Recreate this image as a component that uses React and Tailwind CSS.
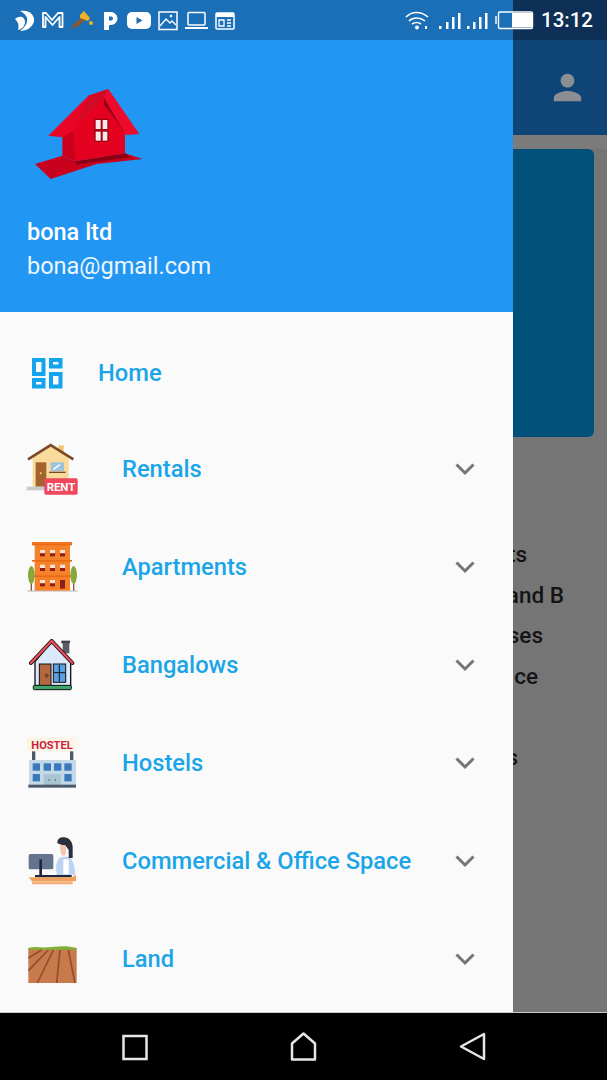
import React from "react";

const font = { fontFamily: "Roboto, sans-serif" };

function Logo() {
  return (
    <svg className="w-[120px] h-[100px] block" viewBox="0 0 360 300">
      <polygon points="15,240 97,215 135,232 285,208 338,225 200,240 62,285" fill="#c9001e" />
      <path d="M135 232L285 208 300 220 140 242z" fill="#8c0014" />
      <polygon points="97,150 135,130 135,232 97,215" fill="#cc001c" />
      <polygon points="130,130 222,35 285,145 285,208 135,232" fill="#e4001f" />
      <polygon points="55,155 175,35 235,15 222,42 130,142 95,160" fill="#ea0426" />
      <polygon points="175,35 235,15 222,42 140,120" fill="#d30a24" />
      <polygon points="235,15 328,150 288,153 222,42" fill="#ee0a2a" />
      <polygon points="222,42 288,153 272,128 222,62" fill="#96001a" />
      <rect x="193" y="104" width="43" height="70" fill="#a30018" />
      <rect x="197" y="108" width="15" height="27" fill="#f8e8e8" />
      <rect x="218" y="108" width="14" height="27" fill="#f8e8e8" />
      <rect x="197" y="143" width="15" height="27" fill="#f8e8e8" />
      <rect x="218" y="143" width="14" height="27" fill="#f8e8e8" />
    </svg>
  );
}

function StatusLeft() {
  return (
    <svg className="w-[240px] h-[40px] block" viewBox="0 0 240 40" fill="none">
      <path d="M20 11C30 9 35 16 34 21 33 27 27 31 20 31 25 27 28 23 27 18 26 15 24 13 20 11z" fill="#fff" />
      <path d="M15 19C20 15 25 17 25 22 25 26 22 29 18 30 19 26 19 23 15 19z" fill="#fff" />
      <path d="M43 27V13h3l6 7 6-7h4.500v14h-3V17l-7 8-7-8v10z" stroke="#fff" strokeWidth="1.800" strokeLinejoin="round" />
      <path d="M73 25l9-8 3 3-8 7-5 1z" fill="#8a5a2e" />
      <path d="M80 15l4-4 6 7-2 3-8-3z" fill="#f0b323" />
      <circle cx="91" cy="23" r="2" fill="#f0b323" />
      <path d="M104 30V12h7a6 6 0 0 1 0 13h-2v5zM109 16.500v4h2a2 2 0 0 0 0-4z" fill="#fff" fillRule="evenodd" />
      <rect x="127" y="12" width="24" height="17" rx="5" fill="#fff" />
      <polygon points="136.500,17 136.500,24 142.500,20.500" fill="#1c6fb5" />
      <rect x="159" y="12" width="18" height="17.500" stroke="#fff" strokeWidth="1.500" />
      <path d="M160 26l6-7 4 4 2-2 4 4" stroke="#fff" strokeWidth="1.300" />
      <circle cx="171" cy="16" r="1.300" fill="#fff" />
      <rect x="188" y="12.500" width="17" height="12.500" rx="1" stroke="#fff" strokeWidth="1.500" />
      <rect x="185" y="27" width="23" height="2" fill="#fff" />
      <rect x="216" y="13" width="18" height="16" rx="1" stroke="#fff" strokeWidth="1.500" />
      <rect x="216" y="13" width="18" height="4" fill="#fff" />
      <path d="M219 20h5v6h-5zM227 20h4M227 23h4M227 26h4" stroke="#fff" strokeWidth="1.300" />
    </svg>
  );
}

function StatusRight() {
  return (
    <svg className="w-[133px] h-[40px] block" viewBox="405 0 133 40" fill="none">
      <path d="M406 17c6-6 15-6 22 0M409 21c4-4 11-4 16 0M412 24c3-2 6-2 9 0" stroke="#fff" strokeWidth="1.600" />
      <circle cx="417" cy="27.500" r="2" fill="#fff" />
      <rect x="425" y="26" width="2" height="3" fill="#fff" />
      {[[439, 26, 3], [446, 22, 7], [452, 17, 12], [458, 13, 16]].map(([x, y, h]) => (
        <rect key={x} x={x} y={y} width="2.500" height={h} fill="#fff" />
      ))}
      {[[467, 26, 3], [473, 22, 7], [479, 17, 12], [485, 13, 16]].map(([x, y, h]) => (
        <rect key={x} x={x} y={y} width="2.500" height={h} fill="#fff" />
      ))}
      <rect x="498.500" y="12" width="34" height="16.500" rx="1.500" stroke="#fff" strokeWidth="1.400" />
      <rect x="495" y="16" width="2" height="8" fill="#fff" opacity="0.700" />
      <rect x="512" y="13" width="20" height="14.500" fill="#fff" />
    </svg>
  );
}

function Chevron() {
  return (
    <svg className="w-[24px] h-[16px] block" viewBox="0 0 24 16" fill="none">
      <path d="M3.500 3.500L12 12l8.500-8.500" stroke="#757575" strokeWidth="3" />
    </svg>
  );
}

function HomeIcon() {
  return (
    <svg className="w-[32px] h-[32px] block" viewBox="31 357 32 32" fill="none" stroke="#14a3ee" strokeWidth="4">
      <rect x="34" y="360" width="9.500" height="14" />
      <rect x="34" y="380" width="9.500" height="6.500" />
      <rect x="51" y="360" width="9.500" height="6.500" />
      <rect x="51" y="374" width="9.500" height="12.500" />
    </svg>
  );
}

function Rent() {
  return (
    <svg className="w-[52px] h-[52px] block" viewBox="78 309 156 156">
      <rect x="175" y="316" width="16" height="24" fill="#f0c66e" />
      <polygon points="98,345 152,318 206,345 206,440 98,440" fill="#f9dc9b" />
      <path d="M84 358l68-43 68 43" fill="none" stroke="#7a4a2a" strokeWidth="8" />
      <rect x="107" y="367" width="32" height="73" fill="#a4622f" />
      <circle cx="122" cy="400" r="3" fill="#f5d778" />
      <rect x="152" y="367" width="40" height="26" fill="#9cc3de" />
      <path d="M160 388l20-14" stroke="#fff" strokeWidth="4" />
      <rect x="147" y="395" width="50" height="4" fill="#7a4a2a" />
      <rect x="80" y="440" width="90" height="11" fill="#c9c9c9" />
      <rect x="133" y="415" width="100" height="49" rx="5" fill="#f0465e" />
      <text x="183" y="453" textAnchor="middle" fontFamily="Roboto, sans-serif" fontWeight="700" fontSize="34" fill="#fff" textLength="86" lengthAdjust="spacingAndGlyphs">RENT</text>
    </svg>
  );
}

function Apt() {
  const ys = [630, 674, 720];
  const xs = [120, 150, 180];
  return (
    <svg className="w-[52px] h-[52px] block" viewBox="78 603 156 156">
      <rect x="82" y="750" width="150" height="6" fill="#d8d8d8" />
      <rect x="104" y="610" width="106" height="142" fill="#f5822a" />
      <rect x="96" y="606" width="120" height="7" fill="#f0741d" />
      <rect x="96" y="612" width="120" height="4" fill="#e86a14" />
      <rect x="96" y="660" width="120" height="5" fill="#e86a14" />
      <rect x="96" y="706" width="120" height="5" fill="#e86a14" />
      {ys.flatMap((y) =>
        xs.map((x) => (
          <g key={`${x}-${y}`}>
            <rect x={x} y={y} width="15" height="10" fill="#f3e2d5" />
            <rect x={x} y={y + 10} width="15" height="9" fill="#8e1f18" />
          </g>
        ))
      )}
      <rect x="180" y="720" width="15" height="26" fill="#8e1f18" />
      <rect x="92" y="715" width="4" height="37" fill="#8a5a2e" />
      <rect x="219" y="715" width="4" height="37" fill="#8a5a2e" />
      <ellipse cx="94" cy="705" rx="10" ry="27" fill="#88a83c" />
      <ellipse cx="221" cy="705" rx="10" ry="27" fill="#88a83c" />
    </svg>
  );
}

function Bang() {
  return (
    <svg className="w-[52px] h-[52px] block" viewBox="78 57 156 156">
      <rect x="184" y="62" width="26" height="8" fill="#3d3d45" />
      <rect x="188" y="68" width="20" height="32" fill="#5b5b66" />
      <polygon points="155,65 212,125 212,198 105,198 105,125" fill="#dbe9fb" stroke="#111" strokeWidth="4" />
      <path d="M93 129l62-66 62 66" fill="none" stroke="#111" strokeWidth="12" strokeLinecap="round" strokeLinejoin="round" />
      <path d="M93 129l62-66 62 66" fill="none" stroke="#ef4d5a" strokeWidth="7" strokeLinecap="round" strokeLinejoin="round" />
      <rect x="118" y="132" width="35" height="66" fill="#b5673f" stroke="#111" strokeWidth="3" />
      <circle cx="140" cy="167" r="4" fill="none" stroke="#111" strokeWidth="2" />
      <rect x="160" y="132" width="37" height="55" fill="#5aa0e0" stroke="#111" strokeWidth="3" />
      <path d="M178 135v50M162 158h33" stroke="#111" strokeWidth="3" />
      <rect x="100" y="196" width="114" height="13" rx="3" fill="#3fa66a" stroke="#111" strokeWidth="3" />
    </svg>
  );
}

function Hostel() {
  return (
    <svg className="w-[52px] h-[52px] block" viewBox="78 351 156 156">
      <rect x="80" y="352" width="150" height="42" fill="#fbf5e6" />
      <text x="156" y="386" textAnchor="middle" fontFamily="Roboto, sans-serif" fontWeight="700" fontSize="34" fill="#cf1c3d" textLength="124" lengthAdjust="spacingAndGlyphs">HOSTEL</text>
      <rect x="96" y="394" width="10" height="26" fill="#4d5a6a" />
      <rect x="210" y="394" width="10" height="26" fill="#4d5a6a" />
      <rect x="87" y="420" width="141" height="76" fill="#c3d9e8" />
      {[98, 131, 162, 193].map((x) => (
        <rect key={x} x={x} y="430" width="22" height="22" fill="#3a78bb" />
      ))}
      <rect x="98" y="462" width="22" height="22" fill="#3a78bb" />
      <rect x="193" y="462" width="22" height="22" fill="#3a78bb" />
      <rect x="131" y="462" width="52" height="34" fill="#a9c4d2" />
      <circle cx="147" cy="480" r="2" fill="#444" />
      <circle cx="166" cy="480" r="2" fill="#444" />
      <rect x="85" y="494" width="143" height="9" fill="#4d5a6a" />
    </svg>
  );
}

function Office() {
  return (
    <svg className="w-[52px] h-[52px] block" viewBox="78 45 156 156">
      <path d="M168 140c2-18 10-30 20-30h14c14 2 22 20 24 55h-56z" fill="#bcd4f0" />
      <rect x="190" y="118" width="16" height="45" fill="#fff" />
      <path d="M172 68c0-14 12-18 22-16 14 2 24 14 24 30v32h-12v-24l-10-14c-8 0-14 0-24-8z" fill="#2b2f3a" />
      <path d="M180 72c6 4 12 6 18 6v20c0 8-8 12-12 8-6-8-6-22-6-34z" fill="#f3c7ad" />
      <rect x="86" y="102" width="74" height="46" rx="5" fill="#64748f" />
      <rect x="118" y="118" width="8" height="50" fill="#1f2740" />
      <rect x="105" y="165" width="110" height="7" fill="#1f2740" />
      <polygon points="86,172 215,172 228,165 228,184 96,184" fill="#f0a05c" />
      <rect x="96" y="184" width="122" height="9" fill="#f4b27a" />
    </svg>
  );
}

function Land() {
  return (
    <svg className="w-[52px] h-[52px] block" viewBox="78 339 156 156">
      <rect x="85" y="384" width="145" height="105" fill="#c97a4c" />
      <path d="M85 384c20-6 40 0 60-2s50-8 85 2v5H85z" fill="#7fb13a" />
      <g stroke="#8f4f2e" strokeWidth="5" fill="none">
        <path d="M125 390L85 414" />
        <path d="M145 390L85 452" />
        <path d="M160 390L112 489" />
        <path d="M180 390L170 489" />
        <path d="M205 390L225 489" />
      </g>
    </svg>
  );
}

const items = [
  ["Rentals", Rent],
  ["Apartments", Apt],
  ["Bangalows", Bang],
  ["Hostels", Hostel],
  ["Commercial & Office Space", Office],
  ["Land", Land],
];

const backLines = [
  ["ts", "pr-[80px]"],
  ["and B", "pr-[43px]"],
  ["ses", "pr-[64px]"],
  ["ce", "pr-[69px]"],
  ["\u00a0", "pr-[0px]"],
  ["s", "pr-[89px]"],
];

export default function App() {
  return (
    <div className="w-[607px] h-[1080px] flex flex-col overflow-hidden bg-black" style={font}>
      <div className="flex flex-1 min-h-0">
        <div className="w-[513px] flex flex-col shrink-0">
          <div className="h-[40px] bg-[#1b6fb6]">
            <div className="h-[40px] flex items-center justify-between relative z-10 -mr-[25px]">
              <StatusLeft />
              <StatusRight />
            </div>
          </div>
          <div className="h-[272px] bg-[#2196f3] flex flex-col pl-[27px] text-white">
            <div className="mt-[44px] ml-[3px]">
              <Logo />
            </div>
            <div className="mt-[31px] text-[23.500px] leading-[34px] font-medium">bona ltd</div>
            <div className="text-[23.500px] leading-[34px] text-[#eef6fe]">bona@gmail.com</div>
          </div>
          <div className="flex-1 bg-[#fafafa] text-[#1aa5e9] text-[23.700px] font-medium">
            <div className="h-[108px] pt-[45px] pl-[31px] flex items-start">
              <HomeIcon />
              <span className="ml-[35px] leading-[32px]">Home</span>
            </div>
            {items.map(([label, Icon]) => (
              <div key={label} className="h-[98px] flex items-center pl-[26px] pr-[36px]">
                <Icon />
                <span className="ml-[44px] flex-1 pt-[2px]">{label}</span>
                <Chevron />
              </div>
            ))}
          </div>
        </div>
        <div className="flex-1 min-w-0 flex flex-col bg-[#757575] overflow-hidden">
          <div className="h-[40px] bg-[#0e3057] flex items-center justify-end pr-[14px] text-white text-[20.500px] font-medium shrink-0">
            13:12
          </div>
          <div className="h-[95px] bg-[#0f4477] flex items-center justify-end pr-[19px] shrink-0">
            <svg className="w-[41px] h-[41px] block" viewBox="0 0 24 24" fill="#8b8f94">
              <path d="M12 12c2.210 0 4-1.790 4-4s-1.790-4-4-4-4 1.790-4 4 1.790 4 4 4zm0 2c-2.670 0-8 1.340-8 4v2h16v-2c0-2.660-5.330-4-8-4z" />
            </svg>
          </div>
          <div className="h-[14px] bg-[#7b7b7b] shrink-0" />
          <div className="h-[288px] w-[81px] bg-[#00507a] rounded-r-[6px] shrink-0" />
          <div className="mt-[97px] flex flex-col text-[22.500px] leading-[40.500px] font-medium text-[#141414]">
            {backLines.map(([t, pr], i) => (
              <div key={i} className={`flex justify-end whitespace-nowrap ${pr}`}>
                {t}
              </div>
            ))}
          </div>
        </div>
      </div>
      <div className="h-[68px] shrink-0 bg-black border-t-[1.500px] border-[#c8c8c8] flex items-center">
        <svg className="w-[607px] h-[66px] block" viewBox="0 1013 607 66" fill="none" stroke="#e6e6e6" strokeWidth="2.500">
          <rect x="123.500" y="1035" width="23" height="23" />
          <path d="M292 1058.500v-16l11.500-10 11.500 10v16z" strokeLinejoin="round" />
          <path d="M484 1033v25l-23-12.500z" strokeLinejoin="round" />
        </svg>
      </div>
    </div>
  );
}
